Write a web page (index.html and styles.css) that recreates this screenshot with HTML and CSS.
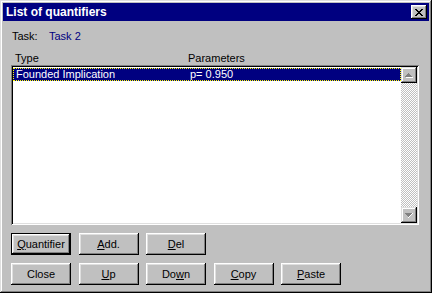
FILE: index.html
```html
<!DOCTYPE html>
<html lang="en">
<head>
    <meta charset="UTF-8">
    <title>List of quantifiers</title>
    <link rel="stylesheet" href="styles.css">
</head>
<body>
    <div class="window">
        <div class="title-bar">
            <span class="title">List of quantifiers</span>
            <div class="close-btn">
                <svg width="8" height="7" viewBox="0 0 8 7">
                    <path d="M0 0h2v1h1v1h2v-1h1v-1h2v1h-1v1h-1v1h-1v1h1v1h1v1h1v1h-2v-1h-1v-1h-2v1h-1v1h-2v-1h1v-1h1v-1h1v-1h-1v-1h-1v-1h-1z" fill="#000"/>
                </svg>
            </div>
        </div>

        <div class="task-row">
            <span class="label">Task:</span>
            <span class="task-name">Task 2</span>
        </div>

        <div class="list-head">
            <span class="col-type">Type</span>
            <span class="col-params">Parameters</span>
        </div>

        <div class="listbox">
            <div class="list-items">
                <div class="item selected">
                    <span class="col-type">Founded Implication</span>
                    <span class="col-params">p= 0.950</span>
                </div>
            </div>
            <div class="scrollbar">
                <div class="scroll-btn">
                    <svg width="8" height="5" viewBox="0 0 8 5">
                        <path d="M3 0h1v1h1v1h1v1h1v1h-7v-1h1v-1h1v-1h1z" fill="#808080"/>
                        <path d="M1 4h7v1h-7z" fill="#fff"/>
                    </svg>
                </div>
                <div class="track"></div>
                <div class="scroll-btn">
                    <svg width="8" height="5" viewBox="0 0 8 5">
                        <path d="M0 0h7v1h-1v1h-1v1h-1v1h-1v-1h-1v-1h-1v-1h-1z" fill="#808080"/>
                        <path d="M7 0h1v1h-1v1h-1v1h-1v1h-1v1h-1v-1h1v-1h1v-1h1v-1h1z" fill="#fff"/>
                    </svg>
                </div>
            </div>
        </div>

        <div class="btn-row">
            <div class="btn default"><u>Q</u>uantifier</div>
            <div class="btn"><u>A</u>dd.</div>
            <div class="btn"><u>D</u>el</div>
        </div>
        <div class="btn-row">
            <div class="btn">Close</div>
            <div class="btn"><u>U</u>p</div>
            <div class="btn">Do<u>w</u>n</div>
            <div class="btn"><u>C</u>opy</div>
            <div class="btn"><u>P</u>aste</div>
        </div>
    </div>
</body>
</html>
```

FILE: styles.css
```css
body {
    margin: 0;
    font-family: "Liberation Sans", Arial, sans-serif;
    font-size: 11px;
    background-color: #c0c0c0;
}

.window {
    width: 432px;
    height: 293px;
    box-sizing: border-box;
    padding: 3px;
    background-color: #c0c0c0;
    box-shadow: inset -1px -1px #000, inset 1px 1px #dfdfdf,
                inset -2px -2px #808080, inset 2px 2px #fff;
}

.title-bar {
    height: 18px;
    background-color: #000080;
    display: flex;
    align-items: center;
    justify-content: space-between;
    padding: 0 2px 0 3px;
}

.title {
    color: #fff;
    font-weight: bold;
    font-size: 12px;
}

.close-btn {
    width: 16px;
    height: 14px;
    background-color: #c0c0c0;
    display: flex;
    align-items: center;
    justify-content: center;
    box-shadow: inset -1px -1px #000, inset 1px 1px #fff,
                inset -2px -2px #808080, inset 2px 2px #dfdfdf;
}

.task-row {
    height: 13px;
    line-height: 13px;
    margin: 9px 0 0 9px;
    display: flex;
}

.label {
    width: 37px;
}

.task-name {
    color: #000080;
}

.list-head {
    height: 13px;
    line-height: 13px;
    margin: 9px 0 0 12px;
    display: flex;
}

.list-head .col-type {
    width: 173px;
}

.listbox {
    margin-left: 8px;
    width: 408px;
    height: 160px;
    box-sizing: border-box;
    padding: 2px;
    background-color: #fff;
    display: flex;
    box-shadow: inset 1px 1px #808080, inset -1px -1px #fff,
                inset 2px 2px #000, inset -2px -2px #dfdfdf;
}

.list-items {
    flex: 1;
    padding-top: 1px;
}

.item {
    height: 13px;
    line-height: 13px;
    display: flex;
    padding-left: 3px;
}

.item .col-type {
    width: 174px;
}

.selected {
    background-color: #000080;
    color: #fff;
    outline: 1px dotted #ffff00;
    outline-offset: -1px;
}

.scrollbar {
    width: 16px;
    display: flex;
    flex-direction: column;
}

.track {
    flex: 1;
    background: repeating-conic-gradient(#c0c0c0 0 25%, #fff 0 50%) 0 0 / 2px 2px;
}

.scroll-btn {
    height: 16px;
    background-color: #c0c0c0;
    display: flex;
    align-items: center;
    justify-content: center;
    box-shadow: inset -1px -1px #000, inset 1px 1px #dfdfdf,
                inset -2px -2px #808080, inset 2px 2px #fff;
}

.btn-row {
    display: flex;
    gap: 7.5px;
    margin: 8px 0 0 8px;
}

.btn {
    width: 60px;
    height: 22px;
    box-sizing: border-box;
    display: flex;
    align-items: center;
    justify-content: center;
    background-color: #c0c0c0;
    box-shadow: inset -1px -1px #000, inset 1px 1px #fff,
                inset -2px -2px #808080, inset 2px 2px #dfdfdf;
}

.btn.default {
    box-shadow: inset 0 0 0 1px #000, inset -2px -2px #000, inset 2px 2px #fff,
                inset -3px -3px #808080, inset 3px 3px #dfdfdf;
}
```
